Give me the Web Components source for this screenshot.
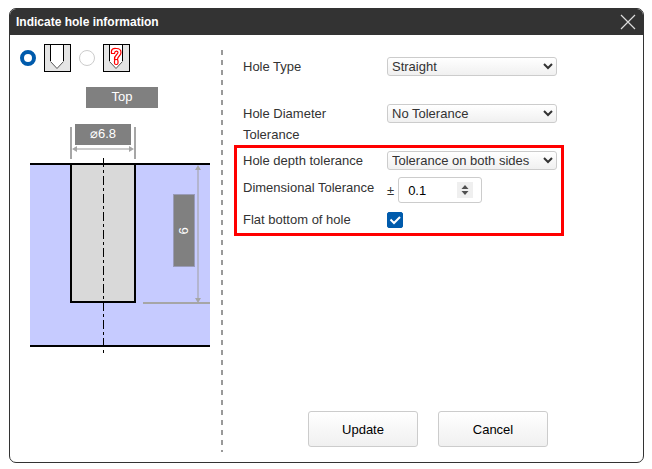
<!DOCTYPE html>
<html lang="en">
<head>
<meta charset="utf-8">
<title>Indicate hole information</title>
<style>
  body {
    margin: 0;
    min-height: 100vh;
    box-sizing: border-box;
    padding: 8px 8px 6px 9px;
    display: flex;
    background: #fff;
    color: #333;
    font: 13px/21px "Liberation Sans", Arial, sans-serif;
  }
</style>
</head>
<body>
<hole-dialog heading="Indicate hole information">
  <hole-preview slot="preview"></hole-preview>
  <hole-form slot="form"></hole-form>
  <action-button slot="actions">Update</action-button>
  <action-button slot="actions">Cancel</action-button>
</hole-dialog>
<script>
  class BaseElement extends HTMLElement {
    constructor() {
      super();
      const t = document.createElement('template');
      t.innerHTML = this.constructor.markup;
      this.attachShadow({ mode: 'open' }).append(t.content.cloneNode(true));
    }
    $(selector) { return this.shadowRoot.querySelector(selector); }
  }

  customElements.define('hole-dialog', class extends BaseElement {
    static markup = `
      <style>
        :host { flex: 1; display: flex; flex-direction: column; border: 1px solid #333; border-radius: 7px; overflow: hidden; }
        header { display: flex; align-items: center; justify-content: space-between; height: 26px; padding: 0 7px 0 6px; background: #333; color: #fff; }
        h1 { margin: 0; font-size: 12px; font-weight: bold; }
        .close { display: flex; padding: 0; border: 0; background: none; }
        main { flex: 1; display: flex; }
        .preview { flex: none; width: 211px; }
        .rule { flex: none; width: 2px; margin: 15px 0 10px; background: repeating-linear-gradient(#999 0 5px, transparent 5px 10px); }
        .side { flex: 1; display: flex; flex-direction: column; justify-content: space-between; padding: 18px 30px 15px 20px; }
        .actions { display: flex; justify-content: center; gap: 20px; }
      </style>
      <header>
        <h1></h1>
        <button class="close" type="button" aria-label="Close">
          <svg width="16" height="16" viewBox="0 0 16 16"><path d="M1 1L15 15M15 1L1 15" stroke="#ddd" stroke-width="1.2"/></svg>
        </button>
      </header>
      <main>
        <div class="preview"><slot name="preview"></slot></div>
        <div class="rule"></div>
        <div class="side">
          <slot name="form"></slot>
          <div class="actions"><slot name="actions"></slot></div>
        </div>
      </main>`;
    connectedCallback() { this.$('h1').textContent = this.getAttribute('heading'); }
  });

  customElements.define('action-button', class extends BaseElement {
    static markup = `
      <style>
        :host { display: block; }
        button { width: 110px; height: 36px; border: 1px solid #ccc; border-radius: 3px; background: linear-gradient(#fff, #f0f0f0); color: #000; font: inherit; }
      </style>
      <button type="button"><slot></slot></button>`;
  });

  customElements.define('hole-preview', class extends BaseElement {
    static markup = `
      <style>
        :host { display: block; padding: 9px 0 0 10px; }
        .modes { display: flex; gap: 8px; }
        label { display: flex; align-items: center; gap: 8px; }
        input { appearance: none; box-sizing: border-box; width: 16px; height: 16px; margin: 0; border: 1px solid #ccc; border-radius: 50%; background: #fff; }
        input:checked { border: 4px solid #005bac; }
        svg { display: block; }
        .drawing { margin: 15px 0 0 10px; }
      </style>
      <div class="modes">
        <label><input type="radio" name="mode" aria-label="Known hole" checked>
          <svg width="27" height="28" viewBox="0 0 27 28">
            <rect x=".5" y=".5" width="26" height="27" fill="#e5e5e5" stroke="#000"/>
            <path d="M6.500 1H19.500V17.500L13 24.500L6.500 17.500Z" fill="#fff"/>
            <path d="M6.500 1V17M19.500 1V17" stroke="#000"/>
            <path d="M6.500 17.500L13 24.500L19.500 17.500" fill="none" stroke="#555"/>
          </svg></label>
        <label><input type="radio" name="mode" aria-label="Unknown hole">
          <svg width="27" height="28" viewBox="0 0 27 28">
            <rect x=".5" y=".5" width="26" height="27" fill="#e5e5e5" stroke="#000"/>
            <path d="M6.500 1H19.500V17.500L13 24.500L6.500 17.500Z" fill="#fff"/>
            <path d="M6.500 1V17M19.500 1V17" stroke="#000"/>
            <path d="M6.500 17.500L13 24.500L19.500 17.500" fill="none" stroke="#555"/>
            <path d="M8.500 9.500C7.500 3.500 12 4.500 13.500 4.500C17 4.500 18 6.500 18 8.500C18 12 14.500 12 14.500 15.500H11.500C11 11 15 10.500 15 8.500C15 6.500 11.500 6.500 11.500 9.500Z" fill="#fff" stroke="#f00" stroke-width="1.200"/>
            <rect x="11.500" y="15.500" width="3.500" height="5" rx="1.500" fill="#fff" stroke="#f00" stroke-width="1.200"/>
          </svg></label>
      </div>
      <svg class="drawing" width="180" height="266" viewBox="0 0 180 266" font-size="13" text-anchor="middle" fill="#fff">
        <rect x="0" y="78" width="180" height="180" fill="#c6cbff"/>
        <rect x="41" y="77" width="64" height="138" fill="#d9d9d9" stroke="#000" stroke-width="2"/>
        <path d="M0 77H180M0 259H180" stroke="#000" stroke-width="2"/>
        <path d="M73.500 71V266" stroke="#000" stroke-dasharray="9 3 3 3"/>
        <path d="M41 40V72M105 40V72M113 216H180" stroke="#a6a6a6" stroke-width="2"/>
        <path d="M45 62H101" stroke="#ccc" stroke-width="2"/>
        <path d="M42 62L47 59V65ZM104 62L99 59V65Z" fill="#a6a6a6"/>
        <path d="M168 81V212" stroke="#b3b5cf" stroke-width="2"/>
        <path d="M168 78L171 83H165ZM168 216L165 211H171Z" fill="#a6a6a6"/>
        <rect x="56" y="0" width="72" height="21" fill="#808080"/>
        <text x="92" y="14">Top</text>
        <rect x="45" y="37" width="56" height="21" fill="#808080"/>
        <text x="73" y="51">⌀6.8</text>
        <rect x="143.500" y="107.500" width="21" height="72" fill="#808080" stroke="#999bb8"/>
        <text transform="translate(158 144) rotate(-90)">6</text>
      </svg>`;
  });

  customElements.define('field-select', class extends BaseElement {
    static markup = `
      <style>
        :host { display: grid; grid-template-columns: 134px 170px; column-gap: 10px; align-items: start; }
        select { height: 19px; margin: 1px 0 0; padding: 0; border: 1px solid #ccc; border-radius: 3px; background: linear-gradient(#fff, #f0f0f0); color: #333; font: inherit; line-height: 17px; }
      </style>
      <label for="control"></label>
      <select id="control"></select>`;
    connectedCallback() {
      this.$('label').textContent = this.getAttribute('label');
      this.$('select').add(new Option(this.getAttribute('value')));
    }
  });

  customElements.define('field-tolerance', class extends BaseElement {
    static markup = `
      <style>
        :host { display: grid; grid-template-columns: 134px 170px; column-gap: 10px; align-items: start; }
        .value { display: flex; align-items: center; gap: 4px; }
        .box { display: flex; align-items: center; box-sizing: border-box; width: 84px; height: 26px; padding: 0 8px 0 9px; border: 1px solid #ccc; border-radius: 3px; }
        input { flex: 1; min-width: 0; padding: 0; border: 0; appearance: textfield; background: none; color: #000; font: inherit; }
        input::-webkit-inner-spin-button { appearance: none; }
        .spin { display: grid; align-content: center; gap: 2px; width: 16px; height: 16px; background: #efefef; }
        button { display: flex; justify-content: center; align-items: center; padding: 0; border: 0; background: none; }
        svg { display: block; }
      </style>
      <label for="control">Dimensional Tolerance</label>
      <div class="value"><span>±</span>
        <div class="box"><input id="control" type="number" step="0.1" value="0.1">
          <div class="spin">
            <button type="button" aria-label="Increase"><svg width="8" height="4" viewBox="0 0 8 4"><path d="M.5 4L4 0L7.500 4Z" fill="#505050"/></svg></button>
            <button type="button" aria-label="Decrease"><svg width="8" height="4" viewBox="0 0 8 4"><path d="M.5 0L4 4L7.500 0Z" fill="#505050"/></svg></button>
          </div>
        </div>
      </div>`;
    connectedCallback() {
      const input = this.$('input');
      const [up, down] = this.shadowRoot.querySelectorAll('button');
      up.onclick = () => input.stepUp();
      down.onclick = () => input.stepDown();
    }
  });

  customElements.define('field-check', class extends BaseElement {
    static markup = `
      <style>
        :host { display: grid; grid-template-columns: 134px 170px; column-gap: 10px; align-items: center; }
        .box { display: grid; width: 16px; height: 16px; }
        .box > * { grid-area: 1 / 1; }
        input { appearance: none; box-sizing: border-box; width: 16px; height: 16px; margin: 0; border: 1px solid #ccc; border-radius: 2px; }
        input:checked { border-color: #005bac; background: #005bac; }
        svg { display: none; pointer-events: none; }
        input:checked + svg { display: block; }
      </style>
      <label for="control"></label>
      <div class="box"><input id="control" type="checkbox" checked>
        <svg width="16" height="16" viewBox="0 0 16 16"><path d="M3.500 7.500L7 11L13 5" fill="none" stroke="#fff" stroke-width="2"/></svg>
      </div>`;
    connectedCallback() { this.$('label').textContent = this.getAttribute('label'); }
  });

  customElements.define('hole-form', class extends BaseElement {
    static markup = `
      <style>
        :host { display: block; }
        .plain { display: grid; gap: 26px; padding-top: 3px; }
        .marked { display: grid; gap: 6px; width: 318px; margin-left: -9px; padding: 2px 0 3px 6px; border: 3px solid #f00; }
      </style>
      <div class="plain">
        <field-select label="Hole Type" value="Straight"></field-select>
        <field-select label="Hole Diameter Tolerance" value="No Tolerance"></field-select>
      </div>
      <div class="marked">
        <field-select label="Hole depth tolerance" value="Tolerance on both sides"></field-select>
        <field-tolerance></field-tolerance>
        <field-check label="Flat bottom of hole"></field-check>
      </div>`;
  });
</script>
</body>
</html>
